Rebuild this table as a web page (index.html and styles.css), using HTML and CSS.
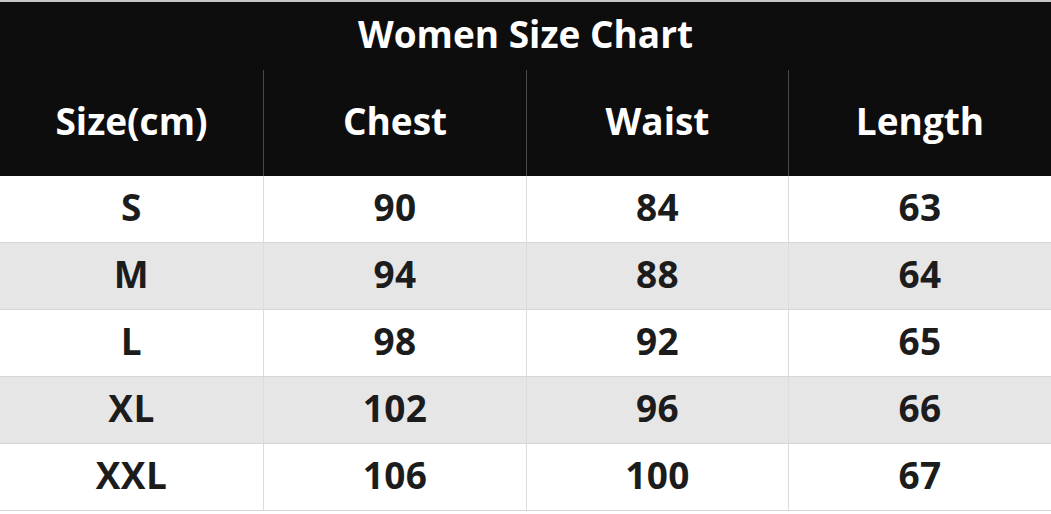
FILE: index.html
```html
<!DOCTYPE html>
<html>
<head>
<meta charset="utf-8">
<link rel="stylesheet" href="styles.css">
</head>
<body>
<div class="chart">
  <div class="head">
    <div class="title">Women Size Chart</div>
    <div class="hrow">
      <div class="hcell">Size(cm)</div>
      <div class="hcell">Chest</div>
      <div class="hcell">Waist</div>
      <div class="hcell">Length</div>
    </div>
  </div>
  <div class="row"><div class="cell">S</div><div class="cell">90</div><div class="cell">84</div><div class="cell">63</div></div>
  <div class="row alt"><div class="cell">M</div><div class="cell">94</div><div class="cell">88</div><div class="cell">64</div></div>
  <div class="row"><div class="cell">L</div><div class="cell">98</div><div class="cell">92</div><div class="cell">65</div></div>
  <div class="row alt"><div class="cell">XL</div><div class="cell">102</div><div class="cell">96</div><div class="cell">66</div></div>
  <div class="row"><div class="cell">XXL</div><div class="cell">106</div><div class="cell">100</div><div class="cell">67</div></div>
</div>
</body>
</html>
```
FILE: styles.css
```css
html, body {
  margin: 0;
  padding: 0;
  background: #fff;
}
.chart {
  width: 1051px;
  border-top: 2px solid #c8c8c8;
  font-family: "Open Sans", "Noto Sans", sans-serif;
  font-weight: 700;
}
.head {
  background: #0d0d0d;
  color: #fff;
}
.title {
  height: 62px;
  padding-bottom: 6px;
  display: flex;
  align-items: center;
  justify-content: center;
  font-size: 37px;
}
.hrow {
  display: grid;
  grid-template-columns: 263px 263px 262px 263px;
  height: 106px;
}
.hcell {
  display: flex;
  align-items: center;
  justify-content: center;
  font-size: 37px;
  padding-bottom: 6px;
}
.hcell + .hcell {
  border-left: 1px solid #4a4a4a;
}
.row {
  display: grid;
  grid-template-columns: 263px 263px 262px 263px;
  height: 66px;
  border-bottom: 1px solid #d6d6d6;
  color: #1c1c1c;
}
.row.alt {
  background: #e7e6e7;
}
.cell {
  display: flex;
  align-items: center;
  justify-content: center;
  font-size: 37px;
  letter-spacing: 0.4px;
  padding-bottom: 5px;
  box-sizing: border-box;
}
.cell + .cell {
  border-left: 1px solid #dcdcdc;
}
```
